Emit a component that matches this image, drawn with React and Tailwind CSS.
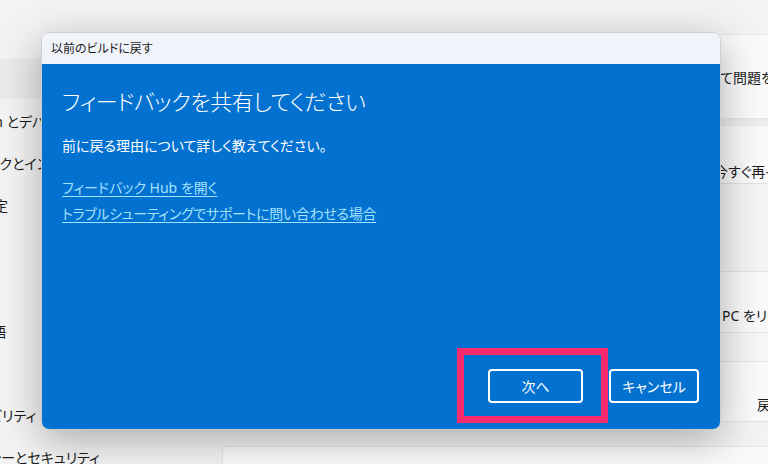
import React from 'react'

const sidebarItems = [
  'システム',
  'Bluetooth とデバイス',
  'ネットワークとインターネット',
  '個人用設定',
  'アプリ',
  'アカウント',
  '時刻と言語',
  'ゲーム',
  'アクセシビリティ',
  'プライバシーとセキュリティ',
]

function App() {
  return (
    <div className="relative w-[768px] h-[464px] overflow-hidden bg-[#f3f3f3] text-[#1b1b1b] font-['Noto_Sans','Noto_Sans_CJK_JP',sans-serif] [font-feature-settings:'palt']">
      <div className="flex h-full">
        {/* sidebar */}
        <div className="w-[222px] shrink-0 overflow-hidden pt-[59px]">
          <div className="-ml-[62px] flex flex-col gap-[2px]">
            {sidebarItems.map((label, i) => (
              <div
                key={label}
                className={
                  'h-[40px] flex items-center text-[14px] whitespace-nowrap rounded ' +
                  (i === 0 ? 'bg-[#eaeaea]' : '')
                }
              >
                {label}
              </div>
            ))}
          </div>
        </div>

        {/* main cards */}
        <div className="flex-1 pt-[34px] text-[14px] whitespace-nowrap">
          <div className="w-[600px] flex flex-col">
            <div className="h-[85px] bg-[#fafafa] border border-[#e6e6e6] rounded-t pl-[497px] pt-[32px]">
              て問題を解決します
            </div>
            <div className="h-[7px] bg-[#ececec]"></div>
            <div className="h-[58px] bg-[#f9f9f9] border-b border-[#e3e3e3] pl-[492px] pt-[35px]">
              今すぐ再インストール
            </div>
            <div className="h-[88px] bg-[#f4f4f4] border-b border-[#e3e3e3]"></div>
            <div className="h-[61px] bg-[#f9f9f9] border-b border-[#e3e3e3] pl-[500px] pt-[33px]">
              PC をリセット
            </div>
            <div className="h-[29px] bg-[#f6f6f6] border-b border-[#e3e3e3]"></div>
            <div className="h-[60px] bg-[#fafafa] border-b border-[#e3e3e3] pl-[535px] pt-[32px]">
              戻す
            </div>
            <div className="h-[24px]"></div>
            <div className="h-[40px] bg-[#fafafa] border border-[#e6e6e6] rounded-t"></div>
          </div>
        </div>
      </div>

      {/* dialog */}
      <div className="absolute left-[41px] top-[32px] w-[680px] h-[398px] rounded-lg overflow-hidden border border-[#cfcfcf] shadow-[0_10px_40px_rgba(0,0,0,0.3)] flex flex-col">
        <div className="h-[31px] shrink-0 bg-[#f0f3f9] flex items-center pl-[9px] text-[12px] text-[#1b1b1b]">
          以前のビルドに戻す
        </div>
        <div className="flex-1 bg-[#0371cf] text-white flex flex-col pl-[20px] pr-[21px] pt-[21px] pb-[26px]">
          <h1 className="text-[22px] leading-[32px] font-light tracking-[-0.5px]">フィードバックを共有してください</h1>
          <p className="mt-[19px] text-[14px] leading-[20px]">前に戻る理由について詳しく教えてください。</p>
          <a className="mt-[22px] self-start text-[14px] leading-[20px] text-[#a3e2ff] underline underline-offset-[3px] cursor-pointer">
            フィードバック Hub を開く
          </a>
          <a className="mt-[6px] self-start text-[14px] leading-[20px] tracking-[-0.3px] text-[#a3e2ff] underline underline-offset-[3px] cursor-pointer">
            トラブルシューティングでサポートに問い合わせる場合
          </a>
          <div className="mt-auto flex justify-end gap-[26px]">
            <button className="w-[95px] h-[34px] border-2 border-white rounded text-[14px]">次へ</button>
            <button className="w-[90px] h-[34px] border-2 border-white rounded text-[14px]">キャンセル</button>
          </div>
        </div>
      </div>

      {/* highlight annotation */}
      <div className="absolute left-[457px] top-[348px] w-[151px] h-[75px] border-[7px] border-[#f72a6e]"></div>
    </div>
  )
}

export default App
